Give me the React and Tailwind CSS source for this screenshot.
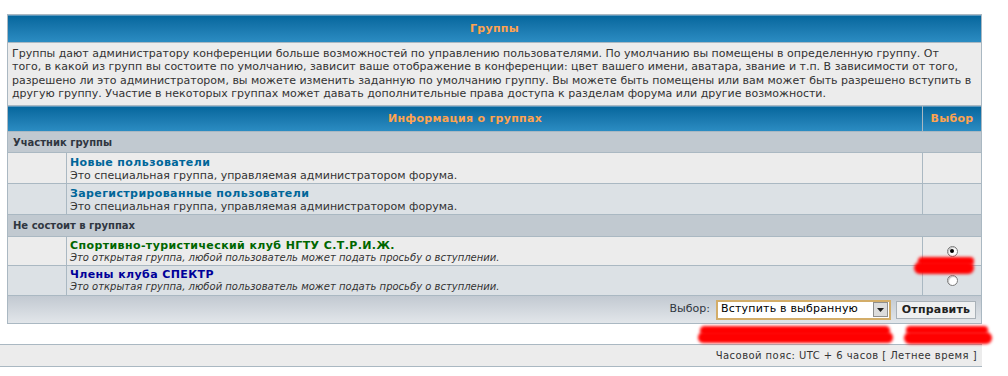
import React from 'react';

const font = { fontFamily: '"DejaVu Sans", Verdana, sans-serif' };

const intro = [
  'Группы дают администратору конференции больше возможностей по управлению пользователями. По умолчанию вы помещены в определенную группу. От',
  'того, в какой из групп вы состоите по умолчанию, зависит ваше отображение в конференции: цвет вашего имени, аватара, звание и т.п. В зависимости от того,',
  'разрешено ли это администратором, вы можете изменить заданную по умолчанию группу. Вы можете быть помещены или вам может быть разрешено вступить в',
  'другую группу. Участие в некоторых группах может давать дополнительные права доступа к разделам форума или другие возможности.',
];

const groupsMember = [
  { name: 'Новые пользователи', desc: 'Это специальная группа, управляемая администратором форума.' },
  { name: 'Зарегистрированные пользователи', desc: 'Это специальная группа, управляемая администратором форума.' },
];

const groupsOther = [
  { name: 'Спортивно-туристический клуб НГТУ С.Т.Р.И.Ж.', color: 'text-[#006600]', checked: true, h: 'h-[28px]' },
  { name: 'Члены клуба СПЕКТР', color: 'text-[#000099]', checked: false, h: 'h-[29px]' },
];

const Radio = ({ checked }) => (
  <span className="flex h-[11px] w-[11px] items-center justify-center rounded-full border border-[#7a7a7a] bg-white shadow-[inset_1px_1px_1px_rgba(0,0,0,0.25)]">
    {checked && <span className="h-[4px] w-[4px] rounded-full bg-black" />}
  </span>
);

const Scribble = ({ className }) => (
  <div className={`pointer-events-none absolute ${className}`}>
    <div className="h-full w-full rounded-full bg-[#ff0000] blur-[1.5px]" />
  </div>
);

export default function App() {
  return (
    <div className="relative h-[376px] w-[1008px] bg-white text-[#333]" style={font}>
      <div className="pl-[7px] pt-[14px]">
        <div className="flex w-[975px] flex-col gap-px border border-[#aab8c2] bg-[#aab8c2]">
          {/* header */}
          <div className="flex h-[27px] items-center justify-center border-t border-[#5b97bd] bg-gradient-to-b from-[#05679d] to-[#2b8cc2] text-[11px] font-bold tracking-[0.3px] text-[#ffa34f]">
            Группы
          </div>
          <div className="h-[62px] overflow-hidden bg-[#ececec] px-[4px] pt-[4px] text-[11px] leading-[13.4px]">
            {intro.map((line) => (
              <div key={line} className="whitespace-nowrap">{line}</div>
            ))}
          </div>
          <div className="flex h-[25px] gap-px text-[11px] font-bold tracking-[0.3px] text-[#ffa34f]">
            <div className="flex flex-1 items-center justify-center border-t border-[#5b97bd] bg-gradient-to-b from-[#05679d] to-[#2b8cc2]">
              Информация о группах
            </div>
            <div className="flex w-[58px] items-center justify-center border-t border-[#5b97bd] bg-gradient-to-b from-[#05679d] to-[#2b8cc2]">
              Выбор
            </div>
          </div>

          <div className="flex h-[20px] items-center bg-[#c1c9d0] px-[5px] text-[10px] font-bold text-[#2f3640]">
            Участник группы
          </div>
          {groupsMember.map((g, i) => (
            <div key={g.name} className={`flex h-[30px] gap-px ${i === 0 ? 'bg-[#ececec]' : 'bg-[#dce1e5]'}`}>
              <div className="w-[58px] shadow-[1px_0_0_#aab8c2]" />
              <div className="flex-1 pl-[3px] pt-[3px]">
                <div className="text-[11px] font-bold leading-[13px] tracking-[0.4px] text-[#006699]">{g.name}</div>
                <div className="text-[11px] leading-[13px]">{g.desc}</div>
              </div>
              <div className="w-[58px] shadow-[-1px_0_0_#aab8c2]" />
            </div>
          ))}

          <div className="flex h-[21px] items-center bg-[#c1c9d0] px-[5px] text-[10px] font-bold text-[#2f3640]">
            Не состоит в группах
          </div>
          {groupsOther.map((g, i) => (
            <div key={g.name} className={`flex ${g.h} gap-px ${i === 0 ? 'bg-[#ececec]' : 'bg-[#dce1e5]'}`}>
              <div className="w-[58px] shadow-[1px_0_0_#aab8c2]" />
              <div className="flex-1 pl-[3px] pt-[2px]">
                <div className={`text-[11px] font-bold leading-[13px] tracking-[0.4px] ${g.color}`}>{g.name}</div>
                <div className="text-[10px] italic leading-[12px]">
                  Это открытая группа, любой пользователь может подать просьбу о вступлении.
                </div>
              </div>
              <div className="flex w-[58px] items-center justify-center shadow-[-1px_0_0_#aab8c2]">
                <Radio checked={g.checked} />
              </div>
            </div>
          ))}

          {/* footer */}
          <div className="flex h-[27px] items-center justify-end gap-[5px] bg-gradient-to-b from-[#c2c9d1] to-[#e2e6ea] pr-[5px] text-[11px]">
            <span className="mr-[1px] text-[#2f3640]">Выбор:</span>
            <div className="flex h-[20px] w-[175px] items-center border-2 border-[#d3ad69] bg-white pl-[3px] pr-px">
              <span className="flex-1 text-[11px] tracking-[0.2px] text-black">Вступить в выбранную</span>
              <span className="flex h-[15px] w-[15px] items-center justify-center border border-[#8f8f8f] bg-[#dcdcdc]">
                <svg width="7" height="4" viewBox="0 0 7 4">
                  <path d="M0 0h7L3.5 4z" fill="#222" />
                </svg>
              </span>
            </div>
            <button className="h-[18px] w-[80px] border border-[#a9b1b8] bg-[#eff0f1] text-[11px] font-bold tracking-[0.2px] text-[#222]">
              Отправить
            </button>
          </div>
        </div>
      </div>

      <div className="mt-[20px] flex h-[23px] w-[982px] items-center justify-end border-y border-[#aab8c2] bg-[#ececec] pr-[5px] text-[10px] tracking-[0.45px] text-[#333]">
        Часовой пояс: UTC + 6 часов [ Летнее время ]
      </div>

      <Scribble className="left-[918px] top-[257px] h-[8px] w-[56px]" />
      <Scribble className="left-[914px] top-[262px] h-[12px] w-[60px]" />
      <Scribble className="left-[700px] top-[326px] h-[9px] w-[190px]" />
      <Scribble className="left-[698px] top-[332px] h-[11px] w-[195px]" />
      <Scribble className="left-[906px] top-[326px] h-[8px] w-[82px]" />
      <Scribble className="left-[904px] top-[332px] h-[12px] w-[88px]" />
    </div>
  );
}
